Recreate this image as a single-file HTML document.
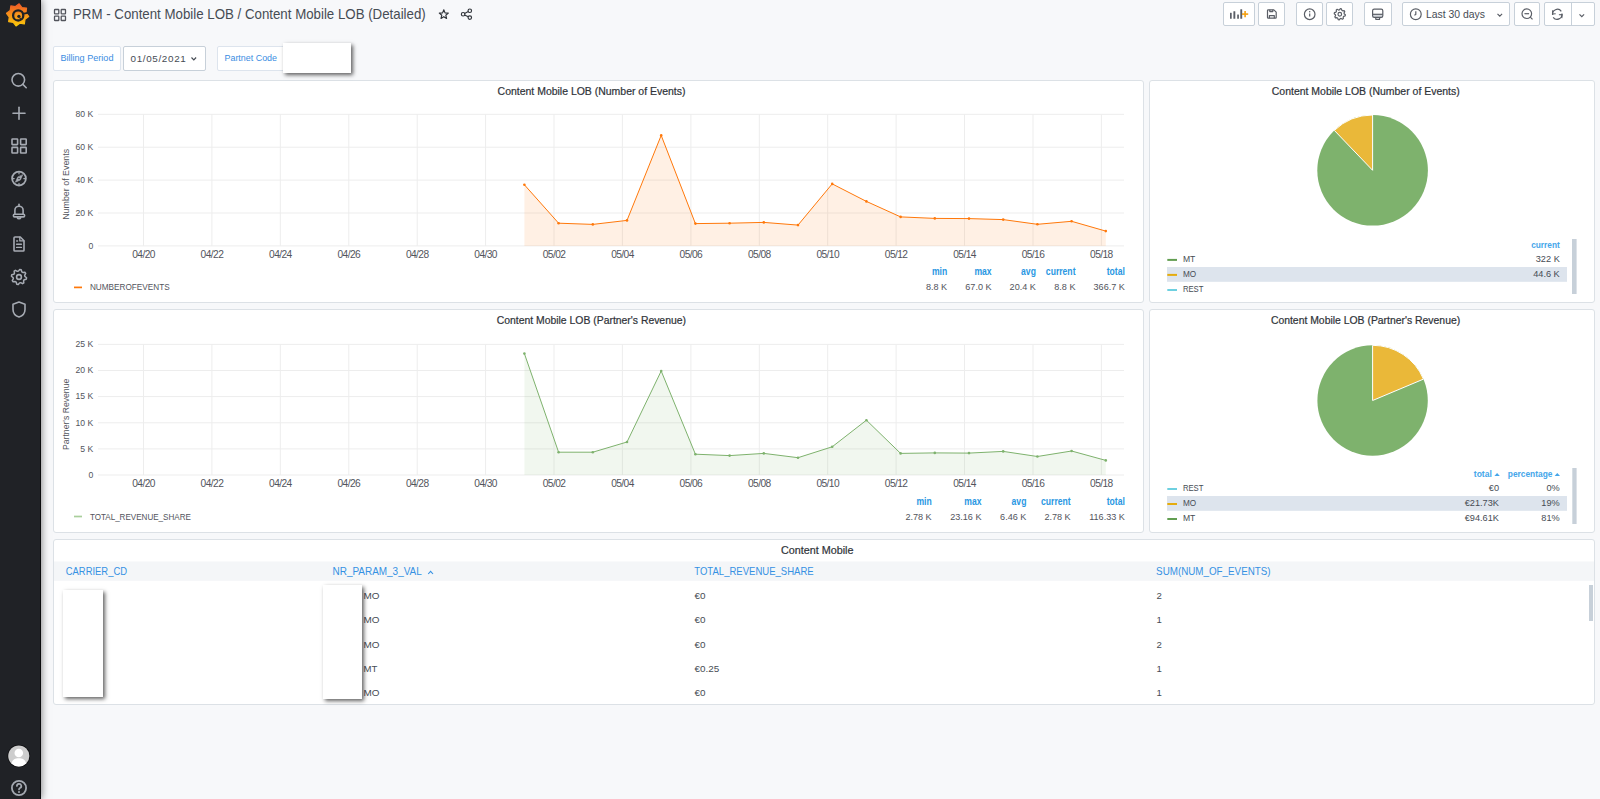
<!DOCTYPE html>
<html><head><meta charset="utf-8"><style>
*{box-sizing:border-box;margin:0;padding:0}
html,body{width:1600px;height:799px;overflow:hidden;background:#f7f8fa;font-family:"Liberation Sans", sans-serif;}
.side{position:absolute;left:0;top:0;width:41px;height:799px;background:#202226;border-right:1px solid #0b0c0e;box-shadow:0 0 8px rgba(0,0,0,0.55);z-index:5}
.btn{position:absolute;top:2px;height:24px;background:#fff;border:1px solid #c7d0d9;border-radius:2px}
.var{position:absolute;top:46px;height:25px;background:#fff;border:1px solid #dde4ed;border-radius:2px;font-size:9.1px;white-space:nowrap}
.redact{position:absolute;background:#fff;box-shadow:1.5px 2px 4px rgba(0,0,0,0.62);z-index:4}
.panel{position:absolute;background:#fff;border:1px solid #dce1e6;border-radius:3px}
.pt{stroke:#2f3339;stroke-width:0.2px}
svg text{font-family:"Liberation Sans", sans-serif}
.ax{font-size:8.9px;fill:#52545c}
.lh{font-size:8.6px;fill:#2a97e2;font-weight:700}
.lv{font-size:8.6px;fill:#52545c}
.ls{font-size:8.6px;fill:#52545c}
.th{font-size:9.6px;fill:#2a97e2}
.td{font-size:9.6px;fill:#52545c}
</style></head><body>
<div class="side">
<svg width="41" height="799" style="position:absolute;left:0;top:0">
 <defs>
  <linearGradient id="lg" x1="0" y1="0" x2="0" y2="1">
   <stop offset="0" stop-color="#f05a28"/><stop offset="1" stop-color="#fbca0a"/>
  </linearGradient>
 </defs>
 <g fill="url(#lg)" stroke="url(#lg)" stroke-width="1.2" stroke-linejoin="round">
  <path d="M19.16,3.81 L21.96,7.49 L26.54,8.16 L25.93,12.75 L28.69,16.46 L25.01,19.26 L24.34,23.84 L19.75,23.23 L16.04,25.99 L13.24,22.31 L8.66,21.64 L9.27,17.05 L6.51,13.34 L10.19,10.54 L10.86,5.96 L15.45,6.57 Z"/>
 </g>
 <circle cx="18.2" cy="15.4" r="5.1" fill="none" stroke="#202226" stroke-width="2.3"/>
 <path d="M22.8,13.8 L28.8,12.6" stroke="#202226" stroke-width="1.8"/>
 <circle cx="18.5" cy="15.9" r="2.9" fill="#f79a1e"/>
 <circle cx="18.9" cy="16.3" r="1.6" fill="#202226"/>
 <path d="M19.6,17.6 L21.3,19.6" stroke="#202226" stroke-width="1.1"/>
 <g fill="none" stroke="#a6abb3" stroke-width="1.6" stroke-linecap="round" stroke-linejoin="round">
  <circle cx="18.3" cy="79.8" r="6.3"/>
  <line x1="22.9" y1="84.4" x2="26.2" y2="87.7"/>
  <line x1="13" y1="113.3" x2="25" y2="113.3"/>
  <line x1="19" y1="107.3" x2="19" y2="119.3"/>
  <rect x="12" y="139" width="5.6" height="5.6" rx="0.5"/>
  <rect x="20.6" y="139" width="5.6" height="5.6" rx="0.5"/>
  <rect x="12" y="147.4" width="5.6" height="5.6" rx="0.5"/>
  <rect x="20.6" y="147.4" width="5.6" height="5.6" rx="0.5"/>
  <circle cx="19" cy="178.6" r="6.9" stroke-width="1.8"/>
  <path d="M19,172.6 L19,173.8 M25,178.6 L23.8,178.6 M19,184.6 L19,183.4 M13,178.6 L14.2,178.6" stroke-width="1.2"/>
  <path d="M22.6,175.0 L20.4,180.0 L15.4,182.2 L17.6,177.2 Z" fill="#a6abb3" stroke-width="0.6"/>
 </g>
 <circle cx="19" cy="178.6" r="0.75" fill="#202226"/>
 <g fill="none" stroke="#a6abb3" stroke-width="1.6" stroke-linecap="round" stroke-linejoin="round">
  <path d="M19,204.2 L19,205.6"/>
  <path d="M14.9,214.3 L14.9,210.3 A4.1,4.1 0 0 1 23.1,210.3 L23.1,214.3"/>
  <rect x="13.4" y="214.3" width="11.2" height="2.6" rx="1.1"/>
  <path d="M17.3,217.6 A1.8,1.6 0 0 0 20.7,217.6"/>
  <path d="M15,237 L20.3,237 L24,240.7 L24,250.2 Q24,251 23.2,251 L14.8,251 Q14,251 14,250.2 L14,238 Q14,237 15,237 Z"/>
  <path d="M19.8,237.2 L19.8,240.9 L23.8,240.9" stroke-width="1.3"/>
  <line x1="16.6" y1="241" x2="17.6" y2="241" stroke-width="1.3"/>
  <line x1="16.6" y1="244.2" x2="21.4" y2="244.2" stroke-width="1.4"/>
  <line x1="16.6" y1="247.4" x2="21.4" y2="247.4" stroke-width="1.4"/>
  <path d="M26.56,277.74 L26.27,279.21 L24.20,279.78 L23.56,280.74 L23.82,282.87 L22.58,283.70 L20.71,282.65 L19.58,282.87 L18.26,284.56 L16.79,284.27 L16.22,282.20 L15.26,281.56 L13.13,281.82 L12.30,280.58 L13.35,278.71 L13.13,277.58 L11.44,276.26 L11.73,274.79 L13.80,274.22 L14.44,273.26 L14.18,271.13 L15.42,270.30 L17.29,271.35 L18.42,271.13 L19.74,269.44 L21.21,269.73 L21.78,271.80 L22.74,272.44 L24.87,272.18 L25.70,273.42 L24.65,275.29 L24.87,276.42 Z" stroke-width="1.5"/>
  <circle cx="19" cy="277" r="2.4"/>
  <path d="M19,302 L25,304.2 L25,309.5 C25,313.5 22,316 19,317 C16,316 13,313.5 13,309.5 L13,304.2 Z"/>
  <circle cx="19" cy="788" r="7.1" stroke-width="1.8" stroke="#a3a8b0"/>
  <path d="M16.9,786 a2.2,2.2 0 1 1 3.1,2 c-0.8,0.4 -1,0.8 -1,1.5" stroke-width="1.7" stroke="#a3a8b0"/>
 </g>
 <circle cx="19" cy="791.9" r="1" fill="#a3a8b0"/>
 <circle cx="18.8" cy="756" r="11.3" fill="#0b0c0e"/>
 <circle cx="18.8" cy="756" r="10.6" fill="#cdcdcd"/>
 <circle cx="18.8" cy="753" r="4.3" fill="#fff"/>
 <path d="M11.5,763.5 C12.5,759.3 15.3,758.3 18.8,758.3 C22.3,758.3 25.1,759.3 26.1,763.5 A10.6,10.6 0 0 1 11.5,763.5 Z" fill="#fff"/>
</svg></div>

<svg width="14" height="14" style="position:absolute;left:53px;top:8px"><g fill="none" stroke="#52545c" stroke-width="1.3">
 <rect x="1.5" y="1.5" width="4.3" height="4.3" rx="0.6"/><rect x="8.2" y="1.5" width="4.3" height="4.3" rx="0.6"/>
 <rect x="1.5" y="8.2" width="4.3" height="4.3" rx="0.6"/><rect x="8.2" y="8.2" width="4.3" height="4.3" rx="0.6"/></g></svg>
<svg width="16" height="16" style="position:absolute;left:436px;top:6px"><path d="M7.80,3.83 L9.03,6.88 L12.32,7.11 L9.80,9.23 L10.59,12.42 L7.80,10.68 L5.01,12.42 L5.80,9.23 L3.28,7.11 L6.57,6.88 Z" fill="none" stroke="#2f3339" stroke-width="1.15" stroke-linejoin="round"/></svg>
<svg width="16" height="16" style="position:absolute;left:459px;top:6px"><g fill="none" stroke="#2f3339" stroke-width="1.15">
 <circle cx="4.1" cy="8.2" r="1.75"/><circle cx="10.8" cy="4.75" r="1.75"/><circle cx="10.8" cy="11.6" r="1.75"/>
 <line x1="5.6" y1="7.4" x2="9.3" y2="5.5"/><line x1="5.6" y1="9.0" x2="9.3" y2="10.85"/></g></svg>

<div class="btn" style="left:1223px;width:32px"><svg width="32" height="23" style="position:absolute;left:-1px;top:-1px">
  <g fill="#5a5e66"><rect x="7" y="10.8" width="1.7" height="6" rx="0.3"/><rect x="10.4" y="9.2" width="1.9" height="7.6" rx="0.3"/><rect x="14.2" y="12.4" width="1.7" height="4.4" rx="0.3"/><rect x="17.3" y="7.2" width="1.9" height="9.6" rx="0.3"/></g>
  <g stroke="#f5a00f" stroke-width="1.6"><line x1="19" y1="12.1" x2="25.2" y2="12.1"/><line x1="22.1" y1="9" x2="22.1" y2="15.2"/></g></svg></div><div class="btn" style="left:1258px;width:27px"><svg width="27" height="23" style="position:absolute;left:-1px;top:-1px"><g fill="none" stroke="#5a5e66" stroke-width="1.2" stroke-linejoin="round">
  <path d="M10.3,7.8 L15.8,7.8 L18.2,10.2 L18.2,15.4 Q18.2,16.2 17.4,16.2 L10.3,16.2 Q9.5,16.2 9.5,15.4 L9.5,8.6 Q9.5,7.8 10.3,7.8 Z"/>
  <path d="M11.8,7.8 L11.8,9.6 L14.8,9.6 L14.8,7.8"/><path d="M11.4,16.2 L11.4,13.6 L16.3,13.6 L16.3,16.2"/></g></svg></div><div class="btn" style="left:1296px;width:27px"><svg width="27" height="23" style="position:absolute;left:-1px;top:-1px"><g fill="none" stroke="#5a5e66" stroke-width="1.2">
  <circle cx="13.7" cy="12.25" r="5.3"/><line x1="13.7" y1="11.5" x2="13.7" y2="14.6"/></g><circle cx="13.7" cy="9.7" r="0.75" fill="#5a5e66"/></svg></div><div class="btn" style="left:1326px;width:27px"><svg width="27" height="23" style="position:absolute;left:-1px;top:-1px"><g fill="none" stroke="#5a5e66" stroke-width="1.2" stroke-linejoin="round">
  <path d="M19.37,12.80 L19.16,13.88 L17.68,14.32 L17.20,15.04 L17.35,16.58 L16.44,17.19 L15.08,16.46 L14.23,16.63 L13.25,17.82 L12.17,17.61 L11.73,16.13 L11.01,15.65 L9.47,15.80 L8.86,14.89 L9.59,13.53 L9.42,12.68 L8.23,11.70 L8.44,10.62 L9.92,10.18 L10.40,9.46 L10.25,7.92 L11.16,7.31 L12.52,8.04 L13.37,7.87 L14.35,6.68 L15.43,6.89 L15.87,8.37 L16.59,8.85 L18.13,8.70 L18.74,9.61 L18.01,10.97 L18.18,11.82 Z"/><circle cx="13.8" cy="12.25" r="1.8"/></g></svg></div><div class="btn" style="left:1364px;width:28px"><svg width="28" height="23" style="position:absolute;left:-1px;top:-1px">
  <rect x="8.9" y="12.3" width="9.6" height="3" fill="#d5d8dd"/>
  <g fill="none" stroke="#5a5e66" stroke-width="1.2" stroke-linejoin="round">
  <rect x="8.6" y="7.1" width="10.2" height="8.2" rx="1.6"/><path d="M8.6,12.3 L18.8,12.3"/><path d="M11.6,15.3 L11.9,17.3 L15.5,17.3 L15.8,15.3"/></g></svg></div><div class="btn" style="left:1402px;width:108px">
 <svg width="108" height="23" style="position:absolute;left:-1px;top:-1px"><g fill="none" stroke="#5a5e66" stroke-width="1.2">
  <circle cx="13.8" cy="12.25" r="5.4"/><path d="M13.8,9.3 L13.8,12.4 L12.4,13.2"/>
  <path d="M95.5,11.8 L97.8,14.1 L100.1,11.8" stroke-width="1.2"/></g></svg></div><div class="btn" style="left:1514px;width:26px"><svg width="26" height="23" style="position:absolute;left:-1px;top:-1px"><g fill="none" stroke="#5a5e66" stroke-width="1.2">
  <circle cx="12.8" cy="11.7" r="4.8"/><line x1="10.5" y1="11.7" x2="15.1" y2="11.7"/><line x1="16.3" y1="15.2" x2="18.5" y2="17.4"/></g></svg></div><div class="btn" style="left:1544px;width:51px">
 <svg width="51" height="23" style="position:absolute;left:-1px;top:-1px"><g fill="none" stroke="#5a5e66" stroke-width="1.2">
  <path d="M8.7,13 A4.8,4.8 0 0 1 17.3,9.3"/><path d="M17.8,11.5 A4.8,4.8 0 0 1 9.2,15.3"/>
  <path d="M8.7,8.3 L8.5,12 L11.7,11.8" stroke-width="1.1"/><path d="M17.8,16.1 L18.1,12.5 L14.9,12.7" stroke-width="1.1"/>
  <line x1="27.5" y1="1" x2="27.5" y2="23" stroke="#c7d0d9" stroke-width="1"/>
  <path d="M35.5,12.3 L37.8,14.6 L40.1,12.3"/></g></svg></div>

<div class="var" style="left:53px;width:68px"></div>
<div class="var" style="left:123px;width:83px;border-color:#c7d0d9">
 <svg width="10" height="10" style="position:absolute;left:65px;top:7px"><path d="M2.5,3.5 L4.8,5.8 L7.1,3.5" fill="none" stroke="#464c54" stroke-width="1.2"/></svg></div>
<div class="var" style="left:217px;width:70px"></div>
<div class="redact" style="left:283px;top:43px;width:68px;height:30px"></div>


<div class="panel" style="left:53px;top:80px;width:1091px;height:223px"></div>
<div class="panel" style="left:1149px;top:80px;width:446px;height:223px"></div>
<div class="panel" style="left:53px;top:309px;width:1091px;height:224px"></div>
<div class="panel" style="left:1149px;top:309px;width:446px;height:224px"></div>
<div class="panel" style="left:53px;top:539px;width:1542px;height:166px"></div>

<svg width="1600" height="799" style="position:absolute;left:0;top:0">
<line x1="98" y1="245.9" x2="1124" y2="245.9" stroke="#ededed" stroke-width="1"/>
<text x="88.49" y="248.70" font-size="9.4" fill="#52545c" textLength="4.81" lengthAdjust="spacingAndGlyphs">0</text>
<line x1="98" y1="213.0" x2="1124" y2="213.0" stroke="#ededed" stroke-width="1"/>
<text x="75.51" y="215.80" font-size="9.4" fill="#52545c" textLength="17.79" lengthAdjust="spacingAndGlyphs">20 K</text>
<line x1="98" y1="180.1" x2="1124" y2="180.1" stroke="#ededed" stroke-width="1"/>
<text x="75.51" y="182.90" font-size="9.4" fill="#52545c" textLength="17.79" lengthAdjust="spacingAndGlyphs">40 K</text>
<line x1="98" y1="147.2" x2="1124" y2="147.2" stroke="#ededed" stroke-width="1"/>
<text x="75.51" y="150.00" font-size="9.4" fill="#52545c" textLength="17.79" lengthAdjust="spacingAndGlyphs">60 K</text>
<line x1="98" y1="114.3" x2="1124" y2="114.3" stroke="#ededed" stroke-width="1"/>
<text x="75.51" y="117.10" font-size="9.4" fill="#52545c" textLength="17.79" lengthAdjust="spacingAndGlyphs">80 K</text>
<line x1="143.5" y1="114.3" x2="143.5" y2="245.9" stroke="#ededed" stroke-width="1"/>
<text x="132.20" y="257.90" font-size="10.2" fill="#52545c" textLength="23.20" lengthAdjust="spacing">04/20</text>
<line x1="211.9" y1="114.3" x2="211.9" y2="245.9" stroke="#ededed" stroke-width="1"/>
<text x="200.62" y="257.90" font-size="10.2" fill="#52545c" textLength="23.20" lengthAdjust="spacing">04/22</text>
<line x1="280.3" y1="114.3" x2="280.3" y2="245.9" stroke="#ededed" stroke-width="1"/>
<text x="269.04" y="257.90" font-size="10.2" fill="#52545c" textLength="23.20" lengthAdjust="spacing">04/24</text>
<line x1="348.8" y1="114.3" x2="348.8" y2="245.9" stroke="#ededed" stroke-width="1"/>
<text x="337.46" y="257.90" font-size="10.2" fill="#52545c" textLength="23.20" lengthAdjust="spacing">04/26</text>
<line x1="417.2" y1="114.3" x2="417.2" y2="245.9" stroke="#ededed" stroke-width="1"/>
<text x="405.88" y="257.90" font-size="10.2" fill="#52545c" textLength="23.20" lengthAdjust="spacing">04/28</text>
<line x1="485.6" y1="114.3" x2="485.6" y2="245.9" stroke="#ededed" stroke-width="1"/>
<text x="474.30" y="257.90" font-size="10.2" fill="#52545c" textLength="23.20" lengthAdjust="spacing">04/30</text>
<line x1="554.0" y1="114.3" x2="554.0" y2="245.9" stroke="#ededed" stroke-width="1"/>
<text x="542.72" y="257.90" font-size="10.2" fill="#52545c" textLength="23.20" lengthAdjust="spacing">05/02</text>
<line x1="622.4" y1="114.3" x2="622.4" y2="245.9" stroke="#ededed" stroke-width="1"/>
<text x="611.14" y="257.90" font-size="10.2" fill="#52545c" textLength="23.20" lengthAdjust="spacing">05/04</text>
<line x1="690.9" y1="114.3" x2="690.9" y2="245.9" stroke="#ededed" stroke-width="1"/>
<text x="679.56" y="257.90" font-size="10.2" fill="#52545c" textLength="23.20" lengthAdjust="spacing">05/06</text>
<line x1="759.3" y1="114.3" x2="759.3" y2="245.9" stroke="#ededed" stroke-width="1"/>
<text x="747.98" y="257.90" font-size="10.2" fill="#52545c" textLength="23.20" lengthAdjust="spacing">05/08</text>
<line x1="827.7" y1="114.3" x2="827.7" y2="245.9" stroke="#ededed" stroke-width="1"/>
<text x="816.40" y="257.90" font-size="10.2" fill="#52545c" textLength="23.20" lengthAdjust="spacing">05/10</text>
<line x1="896.1" y1="114.3" x2="896.1" y2="245.9" stroke="#ededed" stroke-width="1"/>
<text x="884.82" y="257.90" font-size="10.2" fill="#52545c" textLength="23.20" lengthAdjust="spacing">05/12</text>
<line x1="964.5" y1="114.3" x2="964.5" y2="245.9" stroke="#ededed" stroke-width="1"/>
<text x="953.24" y="257.90" font-size="10.2" fill="#52545c" textLength="23.20" lengthAdjust="spacing">05/14</text>
<line x1="1033.0" y1="114.3" x2="1033.0" y2="245.9" stroke="#ededed" stroke-width="1"/>
<text x="1021.66" y="257.90" font-size="10.2" fill="#52545c" textLength="23.20" lengthAdjust="spacing">05/16</text>
<line x1="1101.4" y1="114.3" x2="1101.4" y2="245.9" stroke="#ededed" stroke-width="1"/>
<text x="1090.08" y="257.90" font-size="10.2" fill="#52545c" textLength="23.20" lengthAdjust="spacing">05/18</text>
<polygon points="524.4,245.9 524.4,184.8 558.6,223.2 592.8,224.4 627.0,220.4 661.2,135.4 695.4,223.6 729.6,223.2 763.8,222.4 798.0,225.1 832.2,183.9 866.4,201.4 900.6,216.9 934.8,218.4 969.0,218.6 1003.2,219.6 1037.4,224.3 1071.6,221.3 1105.8,231.1 1105.8,245.9" fill="rgba(255,120,10,0.11)"/>
<polyline points="524.4,184.8 558.6,223.2 592.8,224.4 627.0,220.4 661.2,135.4 695.4,223.6 729.6,223.2 763.8,222.4 798.0,225.1 832.2,183.9 866.4,201.4 900.6,216.9 934.8,218.4 969.0,218.6 1003.2,219.6 1037.4,224.3 1071.6,221.3 1105.8,231.1" fill="none" stroke="#ff780a" stroke-width="1"/>
<circle cx="524.4" cy="184.8" r="1.3" fill="#ff780a"/>
<circle cx="558.6" cy="223.2" r="1.3" fill="#ff780a"/>
<circle cx="592.8" cy="224.4" r="1.3" fill="#ff780a"/>
<circle cx="627.0" cy="220.4" r="1.3" fill="#ff780a"/>
<circle cx="661.2" cy="135.4" r="1.3" fill="#ff780a"/>
<circle cx="695.4" cy="223.6" r="1.3" fill="#ff780a"/>
<circle cx="729.6" cy="223.2" r="1.3" fill="#ff780a"/>
<circle cx="763.8" cy="222.4" r="1.3" fill="#ff780a"/>
<circle cx="798.0" cy="225.1" r="1.3" fill="#ff780a"/>
<circle cx="832.2" cy="183.9" r="1.3" fill="#ff780a"/>
<circle cx="866.4" cy="201.4" r="1.3" fill="#ff780a"/>
<circle cx="900.6" cy="216.9" r="1.3" fill="#ff780a"/>
<circle cx="934.8" cy="218.4" r="1.3" fill="#ff780a"/>
<circle cx="969.0" cy="218.6" r="1.3" fill="#ff780a"/>
<circle cx="1003.2" cy="219.6" r="1.3" fill="#ff780a"/>
<circle cx="1037.4" cy="224.3" r="1.3" fill="#ff780a"/>
<circle cx="1071.6" cy="221.3" r="1.3" fill="#ff780a"/>
<circle cx="1105.8" cy="231.1" r="1.3" fill="#ff780a"/>
<g transform="translate(69.3,184.3) rotate(-90)"><text x="-35.50" y="0.00" font-size="9.2" fill="#52545c" textLength="71.00" lengthAdjust="spacingAndGlyphs">Number of Events</text></g>
<line x1="98" y1="475.0" x2="1124" y2="475.0" stroke="#ededed" stroke-width="1"/>
<text x="88.49" y="477.80" font-size="9.4" fill="#52545c" textLength="4.81" lengthAdjust="spacingAndGlyphs">0</text>
<line x1="98" y1="448.9" x2="1124" y2="448.9" stroke="#ededed" stroke-width="1"/>
<text x="80.32" y="451.68" font-size="9.4" fill="#52545c" textLength="12.98" lengthAdjust="spacingAndGlyphs">5 K</text>
<line x1="98" y1="422.8" x2="1124" y2="422.8" stroke="#ededed" stroke-width="1"/>
<text x="75.51" y="425.56" font-size="9.4" fill="#52545c" textLength="17.79" lengthAdjust="spacingAndGlyphs">10 K</text>
<line x1="98" y1="396.6" x2="1124" y2="396.6" stroke="#ededed" stroke-width="1"/>
<text x="75.51" y="399.44" font-size="9.4" fill="#52545c" textLength="17.79" lengthAdjust="spacingAndGlyphs">15 K</text>
<line x1="98" y1="370.5" x2="1124" y2="370.5" stroke="#ededed" stroke-width="1"/>
<text x="75.51" y="373.32" font-size="9.4" fill="#52545c" textLength="17.79" lengthAdjust="spacingAndGlyphs">20 K</text>
<line x1="98" y1="344.4" x2="1124" y2="344.4" stroke="#ededed" stroke-width="1"/>
<text x="75.51" y="347.20" font-size="9.4" fill="#52545c" textLength="17.79" lengthAdjust="spacingAndGlyphs">25 K</text>
<line x1="143.5" y1="344.4" x2="143.5" y2="475.0" stroke="#ededed" stroke-width="1"/>
<text x="132.20" y="487.00" font-size="10.2" fill="#52545c" textLength="23.20" lengthAdjust="spacing">04/20</text>
<line x1="211.9" y1="344.4" x2="211.9" y2="475.0" stroke="#ededed" stroke-width="1"/>
<text x="200.62" y="487.00" font-size="10.2" fill="#52545c" textLength="23.20" lengthAdjust="spacing">04/22</text>
<line x1="280.3" y1="344.4" x2="280.3" y2="475.0" stroke="#ededed" stroke-width="1"/>
<text x="269.04" y="487.00" font-size="10.2" fill="#52545c" textLength="23.20" lengthAdjust="spacing">04/24</text>
<line x1="348.8" y1="344.4" x2="348.8" y2="475.0" stroke="#ededed" stroke-width="1"/>
<text x="337.46" y="487.00" font-size="10.2" fill="#52545c" textLength="23.20" lengthAdjust="spacing">04/26</text>
<line x1="417.2" y1="344.4" x2="417.2" y2="475.0" stroke="#ededed" stroke-width="1"/>
<text x="405.88" y="487.00" font-size="10.2" fill="#52545c" textLength="23.20" lengthAdjust="spacing">04/28</text>
<line x1="485.6" y1="344.4" x2="485.6" y2="475.0" stroke="#ededed" stroke-width="1"/>
<text x="474.30" y="487.00" font-size="10.2" fill="#52545c" textLength="23.20" lengthAdjust="spacing">04/30</text>
<line x1="554.0" y1="344.4" x2="554.0" y2="475.0" stroke="#ededed" stroke-width="1"/>
<text x="542.72" y="487.00" font-size="10.2" fill="#52545c" textLength="23.20" lengthAdjust="spacing">05/02</text>
<line x1="622.4" y1="344.4" x2="622.4" y2="475.0" stroke="#ededed" stroke-width="1"/>
<text x="611.14" y="487.00" font-size="10.2" fill="#52545c" textLength="23.20" lengthAdjust="spacing">05/04</text>
<line x1="690.9" y1="344.4" x2="690.9" y2="475.0" stroke="#ededed" stroke-width="1"/>
<text x="679.56" y="487.00" font-size="10.2" fill="#52545c" textLength="23.20" lengthAdjust="spacing">05/06</text>
<line x1="759.3" y1="344.4" x2="759.3" y2="475.0" stroke="#ededed" stroke-width="1"/>
<text x="747.98" y="487.00" font-size="10.2" fill="#52545c" textLength="23.20" lengthAdjust="spacing">05/08</text>
<line x1="827.7" y1="344.4" x2="827.7" y2="475.0" stroke="#ededed" stroke-width="1"/>
<text x="816.40" y="487.00" font-size="10.2" fill="#52545c" textLength="23.20" lengthAdjust="spacing">05/10</text>
<line x1="896.1" y1="344.4" x2="896.1" y2="475.0" stroke="#ededed" stroke-width="1"/>
<text x="884.82" y="487.00" font-size="10.2" fill="#52545c" textLength="23.20" lengthAdjust="spacing">05/12</text>
<line x1="964.5" y1="344.4" x2="964.5" y2="475.0" stroke="#ededed" stroke-width="1"/>
<text x="953.24" y="487.00" font-size="10.2" fill="#52545c" textLength="23.20" lengthAdjust="spacing">05/14</text>
<line x1="1033.0" y1="344.4" x2="1033.0" y2="475.0" stroke="#ededed" stroke-width="1"/>
<text x="1021.66" y="487.00" font-size="10.2" fill="#52545c" textLength="23.20" lengthAdjust="spacing">05/16</text>
<line x1="1101.4" y1="344.4" x2="1101.4" y2="475.0" stroke="#ededed" stroke-width="1"/>
<text x="1090.08" y="487.00" font-size="10.2" fill="#52545c" textLength="23.20" lengthAdjust="spacing">05/18</text>
<polygon points="524.4,475.0 524.4,353.6 558.6,452.2 592.8,452.2 627.0,442.0 661.2,371.0 695.4,454.2 729.6,455.6 763.8,453.4 798.0,457.7 832.2,446.8 866.4,420.2 900.6,453.4 934.8,452.9 969.0,453.1 1003.2,451.4 1037.4,456.5 1071.6,451.0 1105.8,460.4 1105.8,475.0" fill="rgba(126,178,109,0.11)"/>
<polyline points="524.4,353.6 558.6,452.2 592.8,452.2 627.0,442.0 661.2,371.0 695.4,454.2 729.6,455.6 763.8,453.4 798.0,457.7 832.2,446.8 866.4,420.2 900.6,453.4 934.8,452.9 969.0,453.1 1003.2,451.4 1037.4,456.5 1071.6,451.0 1105.8,460.4" fill="none" stroke="#7eb26d" stroke-width="1"/>
<circle cx="524.4" cy="353.6" r="1.3" fill="#7eb26d"/>
<circle cx="558.6" cy="452.2" r="1.3" fill="#7eb26d"/>
<circle cx="592.8" cy="452.2" r="1.3" fill="#7eb26d"/>
<circle cx="627.0" cy="442.0" r="1.3" fill="#7eb26d"/>
<circle cx="661.2" cy="371.0" r="1.3" fill="#7eb26d"/>
<circle cx="695.4" cy="454.2" r="1.3" fill="#7eb26d"/>
<circle cx="729.6" cy="455.6" r="1.3" fill="#7eb26d"/>
<circle cx="763.8" cy="453.4" r="1.3" fill="#7eb26d"/>
<circle cx="798.0" cy="457.7" r="1.3" fill="#7eb26d"/>
<circle cx="832.2" cy="446.8" r="1.3" fill="#7eb26d"/>
<circle cx="866.4" cy="420.2" r="1.3" fill="#7eb26d"/>
<circle cx="900.6" cy="453.4" r="1.3" fill="#7eb26d"/>
<circle cx="934.8" cy="452.9" r="1.3" fill="#7eb26d"/>
<circle cx="969.0" cy="453.1" r="1.3" fill="#7eb26d"/>
<circle cx="1003.2" cy="451.4" r="1.3" fill="#7eb26d"/>
<circle cx="1037.4" cy="456.5" r="1.3" fill="#7eb26d"/>
<circle cx="1071.6" cy="451.0" r="1.3" fill="#7eb26d"/>
<circle cx="1105.8" cy="460.4" r="1.3" fill="#7eb26d"/>
<g transform="translate(69.3,414.4) rotate(-90)"><text x="-35.62" y="0.00" font-size="9.2" fill="#52545c" textLength="71.25" lengthAdjust="spacingAndGlyphs">Partner's Revenue</text></g>
<circle cx="1372.6" cy="170.3" r="55.3" fill="#7eb26d"/>
<path d="M1372.6,170.3 L1334.32,130.39 A55.3,55.3 0 0 1 1372.60,115.00 Z" fill="#eab839" stroke="#fff" stroke-width="1"/>
<circle cx="1372.6" cy="400.5" r="55.2" fill="#7eb26d"/>
<path d="M1372.6,400.5 L1372.60,345.30 A55.2,55.2 0 0 1 1423.49,379.11 Z" fill="#eab839" stroke="#fff" stroke-width="1"/>
<text x="931.91" y="275.10" font-size="10" fill="#2a97e2" font-weight="700" textLength="15.29" lengthAdjust="spacingAndGlyphs">min</text>
<text x="925.95" y="290.25" font-size="9.1" fill="#52545c">8.8 K</text>
<text x="974.39" y="275.10" font-size="10" fill="#2a97e2" font-weight="700" textLength="17.21" lengthAdjust="spacingAndGlyphs">max</text>
<text x="965.29" y="290.25" font-size="9.1" fill="#52545c">67.0 K</text>
<text x="1021.08" y="275.10" font-size="10" fill="#2a97e2" font-weight="700" textLength="14.82" lengthAdjust="spacingAndGlyphs">avg</text>
<text x="1009.59" y="290.25" font-size="9.1" fill="#52545c">20.4 K</text>
<text x="1045.87" y="275.10" font-size="10" fill="#2a97e2" font-weight="700" textLength="29.63" lengthAdjust="spacingAndGlyphs">current</text>
<text x="1054.25" y="290.25" font-size="9.1" fill="#52545c">8.8 K</text>
<text x="1106.75" y="275.10" font-size="10" fill="#2a97e2" font-weight="700" textLength="18.15" lengthAdjust="spacingAndGlyphs">total</text>
<text x="1093.53" y="290.25" font-size="9.1" fill="#52545c">366.7 K</text>
<text x="916.41" y="505.10" font-size="10" fill="#2a97e2" font-weight="700" textLength="15.29" lengthAdjust="spacingAndGlyphs">min</text>
<text x="905.39" y="520.25" font-size="9.1" fill="#52545c">2.78 K</text>
<text x="964.29" y="505.10" font-size="10" fill="#2a97e2" font-weight="700" textLength="17.21" lengthAdjust="spacingAndGlyphs">max</text>
<text x="950.13" y="520.25" font-size="9.1" fill="#52545c">23.16 K</text>
<text x="1011.58" y="505.10" font-size="10" fill="#2a97e2" font-weight="700" textLength="14.82" lengthAdjust="spacingAndGlyphs">avg</text>
<text x="1000.09" y="520.25" font-size="9.1" fill="#52545c">6.46 K</text>
<text x="1041.07" y="505.10" font-size="10" fill="#2a97e2" font-weight="700" textLength="29.63" lengthAdjust="spacingAndGlyphs">current</text>
<text x="1044.39" y="520.25" font-size="9.1" fill="#52545c">2.78 K</text>
<text x="1106.75" y="505.10" font-size="10" fill="#2a97e2" font-weight="700" textLength="18.15" lengthAdjust="spacingAndGlyphs">total</text>
<text x="1089.15" y="520.25" font-size="9.1" fill="#52545c">116.33 K</text>
<line x1="74" y1="287.4" x2="82" y2="287.4" stroke="#ff780a" stroke-width="1.7"/>
<text x="89.90" y="290.40" font-size="9.2" fill="#52545c" textLength="79.80" lengthAdjust="spacingAndGlyphs">NUMBEROFEVENTS</text>
<line x1="74" y1="516.5" x2="82" y2="516.5" stroke="#a9cf9c" stroke-width="1.7"/>
<text x="89.90" y="519.60" font-size="9.2" fill="#52545c" textLength="101.00" lengthAdjust="spacingAndGlyphs">TOTAL_REVENUE_SHARE</text>
<rect x="1167" y="267" width="400" height="14.8" fill="#dde4ed"/>
<rect x="1572" y="239" width="4.6" height="55" fill="#c7d0d9"/>
<text x="1531.20" y="247.60" font-size="9.8" fill="#45a6ea" font-weight="700" textLength="28.60" lengthAdjust="spacingAndGlyphs">current</text>
<line x1="1167.3" y1="259.9" x2="1177" y2="259.9" stroke="#629e51" stroke-width="2"/>
<text x="1182.90" y="261.90" font-size="9.4" fill="#464c54" textLength="12.40" lengthAdjust="spacingAndGlyphs">MT</text>
<text x="1535.76" y="261.90" font-size="9.2" fill="#464c54">322 K</text>
<line x1="1167.3" y1="274.9" x2="1177" y2="274.9" stroke="#e5ac0e" stroke-width="2"/>
<text x="1182.90" y="277.00" font-size="9.4" fill="#464c54" textLength="13.20" lengthAdjust="spacingAndGlyphs">MO</text>
<text x="1533.20" y="277.00" font-size="9.2" fill="#464c54">44.6 K</text>
<line x1="1167.3" y1="290" x2="1177" y2="290" stroke="#6ed0e0" stroke-width="2"/>
<text x="1182.90" y="292.00" font-size="9.4" fill="#464c54" textLength="20.60" lengthAdjust="spacingAndGlyphs">REST</text>
<rect x="1167" y="496" width="400" height="14.8" fill="#dde4ed"/>
<rect x="1572.3" y="468" width="4.3" height="56" fill="#c7d0d9"/>
<text x="1473.80" y="477.00" font-size="9.8" fill="#45a6ea" font-weight="700" textLength="18.00" lengthAdjust="spacingAndGlyphs">total</text>
<path d="M1494.4,476.0 L1497.1,473.0 L1499.8,476.0 Z" fill="#45a6ea"/>
<text x="1507.80" y="477.00" font-size="9.6" fill="#45a6ea" font-weight="700" textLength="44.60" lengthAdjust="spacingAndGlyphs">percentage</text>
<path d="M1554.6,476.0 L1557.3,473.0 L1560.0,476.0 Z" fill="#45a6ea"/>
<line x1="1167.3" y1="489" x2="1177" y2="489" stroke="#6ed0e0" stroke-width="2"/>
<text x="1182.90" y="490.90" font-size="9.4" fill="#464c54" textLength="20.60" lengthAdjust="spacingAndGlyphs">REST</text>
<text x="1488.77" y="490.90" font-size="9.2" fill="#464c54">€0</text>
<text x="1546.41" y="490.90" font-size="9.2" fill="#464c54">0%</text>
<line x1="1167.3" y1="504" x2="1177" y2="504" stroke="#e5ac0e" stroke-width="2"/>
<text x="1182.90" y="505.90" font-size="9.4" fill="#464c54" textLength="13.20" lengthAdjust="spacingAndGlyphs">MO</text>
<text x="1464.72" y="505.90" font-size="9.2" fill="#464c54">€21.73K</text>
<text x="1541.29" y="505.90" font-size="9.2" fill="#464c54">19%</text>
<line x1="1167.3" y1="519" x2="1177" y2="519" stroke="#629e51" stroke-width="2"/>
<text x="1182.90" y="520.90" font-size="9.4" fill="#464c54" textLength="12.40" lengthAdjust="spacingAndGlyphs">MT</text>
<text x="1464.72" y="520.90" font-size="9.2" fill="#464c54">€94.61K</text>
<text x="1541.29" y="520.90" font-size="9.2" fill="#464c54">81%</text>
<rect x="54" y="561.5" width="1540" height="19.3" fill="#f4f6f8"/>
<rect x="1589" y="585" width="4" height="36" fill="#c7d0d9"/>
<text x="65.80" y="575.10" font-size="11" fill="#3591e3" textLength="61.20" lengthAdjust="spacingAndGlyphs">CARRIER_CD</text>
<text x="332.50" y="575.10" font-size="11" fill="#3591e3" textLength="89.25" lengthAdjust="spacingAndGlyphs">NR_PARAM_3_VAL</text>
<path d="M428.2,574 L430.6,571.3 L433,574" fill="none" stroke="#3591e3" stroke-width="1.1"/>
<text x="694.30" y="575.10" font-size="11" fill="#3591e3" textLength="119.40" lengthAdjust="spacingAndGlyphs">TOTAL_REVENUE_SHARE</text>
<text x="1156.10" y="575.10" font-size="11" fill="#3591e3" textLength="114.50" lengthAdjust="spacingAndGlyphs">SUM(NUM_OF_EVENTS)</text>
<text x="363.45" y="598.90" font-size="9.6" fill="#464c54" textLength="16.00" lengthAdjust="spacingAndGlyphs">MO</text>
<text x="694.60" y="598.90" font-size="9.6" fill="#464c54" textLength="11.00" lengthAdjust="spacingAndGlyphs">€0</text>
<text x="1156.60" y="598.90" font-size="9.6" fill="#464c54">2</text>
<text x="363.45" y="623.27" font-size="9.6" fill="#464c54" textLength="16.00" lengthAdjust="spacingAndGlyphs">MO</text>
<text x="694.60" y="623.27" font-size="9.6" fill="#464c54" textLength="11.00" lengthAdjust="spacingAndGlyphs">€0</text>
<text x="1156.60" y="623.27" font-size="9.6" fill="#464c54">1</text>
<text x="363.45" y="647.64" font-size="9.6" fill="#464c54" textLength="16.00" lengthAdjust="spacingAndGlyphs">MO</text>
<text x="694.60" y="647.64" font-size="9.6" fill="#464c54" textLength="11.00" lengthAdjust="spacingAndGlyphs">€0</text>
<text x="1156.60" y="647.64" font-size="9.6" fill="#464c54">2</text>
<text x="363.45" y="672.01" font-size="9.6" fill="#464c54">MT</text>
<text x="694.60" y="672.01" font-size="9.6" fill="#464c54" textLength="24.74" lengthAdjust="spacingAndGlyphs">€0.25</text>
<text x="1156.60" y="672.01" font-size="9.6" fill="#464c54">1</text>
<text x="363.45" y="696.38" font-size="9.6" fill="#464c54" textLength="16.00" lengthAdjust="spacingAndGlyphs">MO</text>
<text x="694.60" y="696.38" font-size="9.6" fill="#464c54" textLength="11.00" lengthAdjust="spacingAndGlyphs">€0</text>
<text x="1156.60" y="696.38" font-size="9.6" fill="#464c54">1</text>
<text x="73.00" y="18.75" font-size="14.6" fill="#464c54" textLength="352.75" lengthAdjust="spacingAndGlyphs">PRM - Content Mobile LOB / Content Mobile LOB (Detailed)</text><text x="1426.00" y="17.50" font-size="10.8" fill="#464c54" textLength="59.00" lengthAdjust="spacingAndGlyphs">Last 30 days</text><text x="60.40" y="61.00" font-size="9.4" fill="#3a8de2" textLength="53.10" lengthAdjust="spacingAndGlyphs">Billing Period</text><text x="130.50" y="61.80" font-size="9.9" fill="#464c54" textLength="55.30" lengthAdjust="spacing">01/05/2021</text><text x="224.50" y="61.20" font-size="9.4" fill="#3a8de2" textLength="52.50" lengthAdjust="spacingAndGlyphs">Partnet Code</text>
<text x="497.60" y="95.00" font-size="10.1" fill="#2f3339" textLength="187.90" lengthAdjust="spacingAndGlyphs" class="pt">Content Mobile LOB (Number of Events)</text><text x="1271.80" y="95.00" font-size="10.1" fill="#2f3339" textLength="187.90" lengthAdjust="spacingAndGlyphs" class="pt">Content Mobile LOB (Number of Events)</text><text x="496.70" y="324.20" font-size="10.1" fill="#2f3339" textLength="189.30" lengthAdjust="spacingAndGlyphs" class="pt">Content Mobile LOB (Partner's Revenue)</text><text x="1270.90" y="324.20" font-size="10.1" fill="#2f3339" textLength="189.30" lengthAdjust="spacingAndGlyphs" class="pt">Content Mobile LOB (Partner's Revenue)</text><text x="781.00" y="554.20" font-size="10.1" fill="#2f3339" textLength="72.50" lengthAdjust="spacingAndGlyphs" class="pt">Content Mobile</text>
</svg>

<div class="redact" style="left:63px;top:590px;width:40px;height:107px"></div>
<div class="redact" style="left:323px;top:585px;width:39px;height:114px"></div>

</body></html>
